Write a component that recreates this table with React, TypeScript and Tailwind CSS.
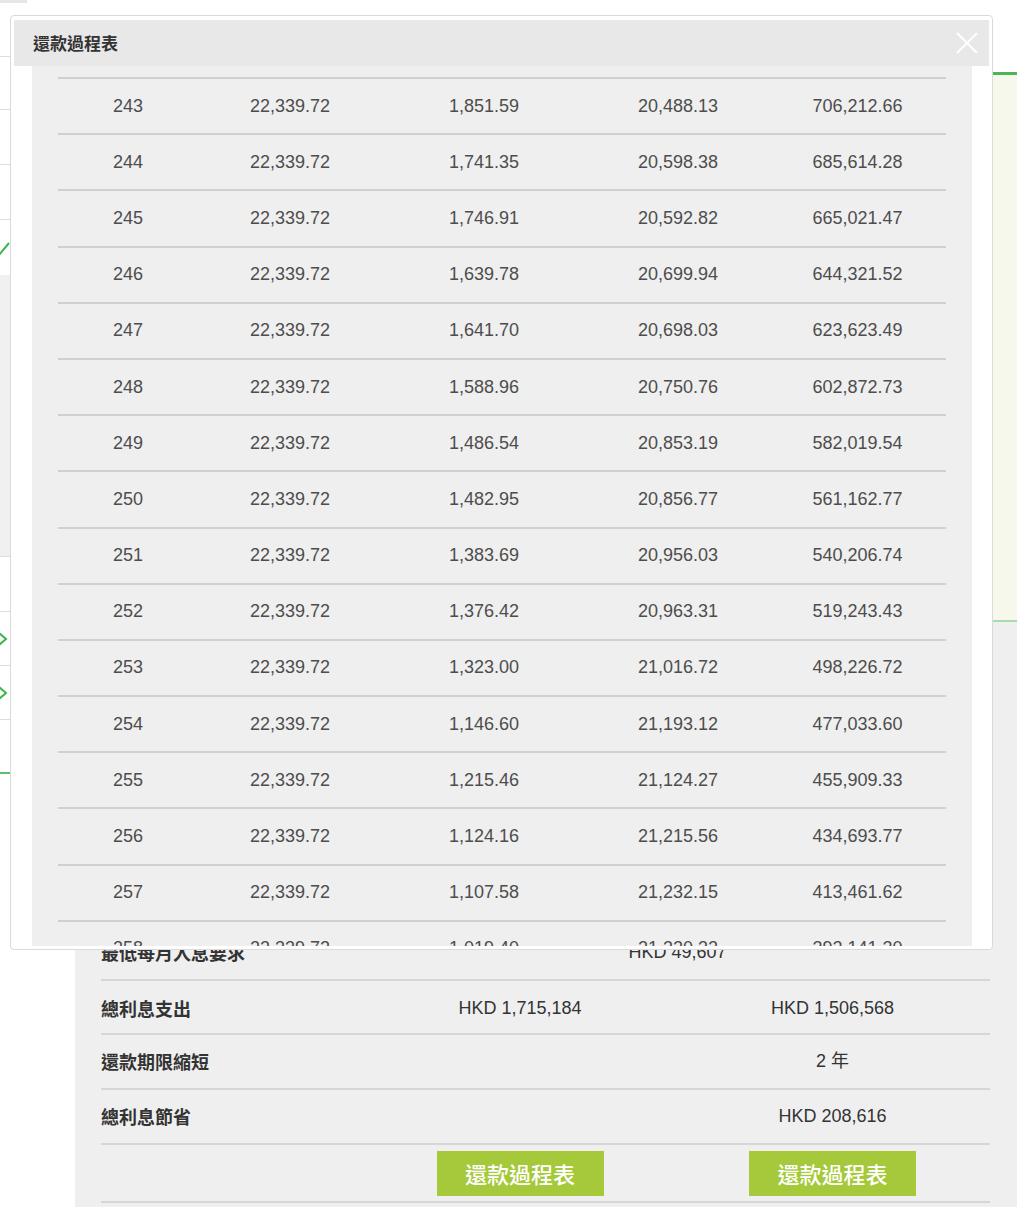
import React from 'react';

const rows: string[][] = [
  ['243', '22,339.72', '1,851.59', '20,488.13', '706,212.66'],
  ['244', '22,339.72', '1,741.35', '20,598.38', '685,614.28'],
  ['245', '22,339.72', '1,746.91', '20,592.82', '665,021.47'],
  ['246', '22,339.72', '1,639.78', '20,699.94', '644,321.52'],
  ['247', '22,339.72', '1,641.70', '20,698.03', '623,623.49'],
  ['248', '22,339.72', '1,588.96', '20,750.76', '602,872.73'],
  ['249', '22,339.72', '1,486.54', '20,853.19', '582,019.54'],
  ['250', '22,339.72', '1,482.95', '20,856.77', '561,162.77'],
  ['251', '22,339.72', '1,383.69', '20,956.03', '540,206.74'],
  ['252', '22,339.72', '1,376.42', '20,963.31', '519,243.43'],
  ['253', '22,339.72', '1,323.00', '21,016.72', '498,226.72'],
  ['254', '22,339.72', '1,146.60', '21,193.12', '477,033.60'],
  ['255', '22,339.72', '1,215.46', '21,124.27', '455,909.33'],
  ['256', '22,339.72', '1,124.16', '21,215.56', '434,693.77'],
  ['257', '22,339.72', '1,107.58', '21,232.15', '413,461.62'],
  ['258', '22,339.72', '1,019.40', '21,320.32', '392,141.30'],
];

const colWidths = ['w-[140px]', 'w-[184px]', 'w-[204px]', 'w-[184px]', 'w-[175px]'];

function Chevron() {
  return (
    <svg width="10" height="16" viewBox="0 0 10 16" className="shrink-0">
      <polyline points="-1,2 6,8 -1,14" fill="none" stroke="#3cb54a" strokeWidth="2" />
    </svg>
  );
}

export default function App() {
  return (
    <div className="relative w-full h-[1207px] overflow-hidden bg-white font-['Liberation_Sans','Noto_Sans_CJK_TC',sans-serif]">
      {/* page behind the dialog */}
      <div className="h-[3px] w-[27px] bg-[#e6e6e6]"></div>
      <div className="flex h-[1204px]">
        {/* left list, mostly hidden */}
        <div className="w-[10px] shrink-0 overflow-hidden flex flex-col">
          <div className="h-[54px] border-b border-[#dddddd]"></div>
          <div className="h-[53px] border-b border-[#dddddd]"></div>
          <div className="h-[55px] border-b border-[#dddddd]"></div>
          <div className="h-[55px] border-b border-[#dddddd]"></div>
          <div className="h-[55px] flex items-center">
            <svg width="10" height="24" viewBox="0 0 10 24">
              <polyline points="-6,14 -1,19 9,7" fill="none" stroke="#3cb54a" strokeWidth="2" />
            </svg>
          </div>
          <div className="h-[282px] bg-[#f0f0f0] border-b border-[#dddddd]"></div>
          <div className="h-[55px] border-b border-[#dddddd]"></div>
          <div className="h-[54px] border-b border-[#dddddd] flex items-center"><Chevron /></div>
          <div className="h-[54px] border-b border-[#dddddd] flex items-center"><Chevron /></div>
          <div className="h-[54px] border-b-2 border-[#5cbf6a]"></div>
        </div>
        <div className="w-[65px] shrink-0"></div>

        {/* main column */}
        <div className="flex-1 flex flex-col">
          <div className="h-[69px] shrink-0"></div>
          <div className="h-[550px] shrink-0 bg-[#f6f8eb] border-t-[3px] border-[#4db553] border-b-2 border-b-[#a8dcaa]"></div>
          <div className="flex-1 bg-[#efefef] pt-[304px] pl-[26px] pr-[27px] text-[18px] text-[#333333]">
            <div className="flex h-[55px] items-center border-b-2 border-[#d6d6d6]">
              <div className="w-[264px] font-bold font-['Noto_Sans_CJK_TC',sans-serif]">最低每月入息要求</div>
              <div className="flex-1 text-center">HKD 49,607</div>
            </div>
            <div className="flex h-[54px] items-center border-b-2 border-[#d6d6d6] pt-[2px]">
              <div className="w-[264px] font-bold font-['Noto_Sans_CJK_TC',sans-serif]">總利息支出</div>
              <div className="w-[310px] text-center">HKD 1,715,184</div>
              <div className="flex-1 text-center">HKD 1,506,568</div>
            </div>
            <div className="flex h-[55px] items-center border-b-2 border-[#d6d6d6]">
              <div className="w-[264px] font-bold font-['Noto_Sans_CJK_TC',sans-serif]">還款期限縮短</div>
              <div className="w-[310px] text-center"></div>
              <div className="flex-1 text-center">2 年</div>
            </div>
            <div className="flex h-[55px] items-center border-b-2 border-[#d6d6d6]">
              <div className="w-[264px] font-bold font-['Noto_Sans_CJK_TC',sans-serif]">總利息節省</div>
              <div className="w-[310px] text-center"></div>
              <div className="flex-1 text-center">HKD 208,616</div>
            </div>
            <div className="flex h-[58px] items-center border-b-2 border-[#d6d6d6]">
              <div className="w-[264px]"></div>
              <div className="w-[310px] flex justify-center">
                <button className="w-[167px] h-[45px] bg-[#a5c93a] text-white text-[22px] font-medium font-['Noto_Sans_CJK_TC',sans-serif]">還款過程表</button>
              </div>
              <div className="flex-1 flex justify-center">
                <button className="w-[167px] h-[45px] bg-[#a5c93a] text-white text-[22px] font-medium font-['Noto_Sans_CJK_TC',sans-serif]">還款過程表</button>
              </div>
            </div>
          </div>
        </div>
      </div>

      {/* dialog */}
      <div className="absolute left-[10px] top-[15px] w-[983px] h-[935px] bg-white border border-[#dadada] rounded-[4px] pt-[4px] px-[3px] pb-[3px] flex flex-col">
        <div className="h-[46px] shrink-0 bg-[#e8e8e8] flex items-center justify-between pl-[19px] pr-[11px]">
          <span className="text-[17px] font-bold text-[#333333] font-['Noto_Sans_CJK_TC',sans-serif]">還款過程表</span>
          <svg width="22" height="22" viewBox="0 0 22 22">
            <line x1="1" y1="1" x2="21" y2="21" stroke="white" strokeWidth="2" />
            <line x1="21" y1="1" x2="1" y2="21" stroke="white" strokeWidth="2" />
          </svg>
        </div>
        <div className="h-[880px] ml-[18px] mr-[17px] bg-[#efefef] overflow-hidden px-[26px] pt-[11px]">
          <div className="border-t-2 border-[#d0d0d0]">
            {rows.map((r) => (
              <div key={r[0]} className="flex h-[56.2px] items-center border-b-2 border-[#d0d0d0] text-[18px] text-[#4d4d4d]">
                {r.map((c, i) => (
                  <div key={i} className={`${colWidths[i]} text-center`}>{c}</div>
                ))}
              </div>
            ))}
          </div>
        </div>
      </div>
    </div>
  );
}
